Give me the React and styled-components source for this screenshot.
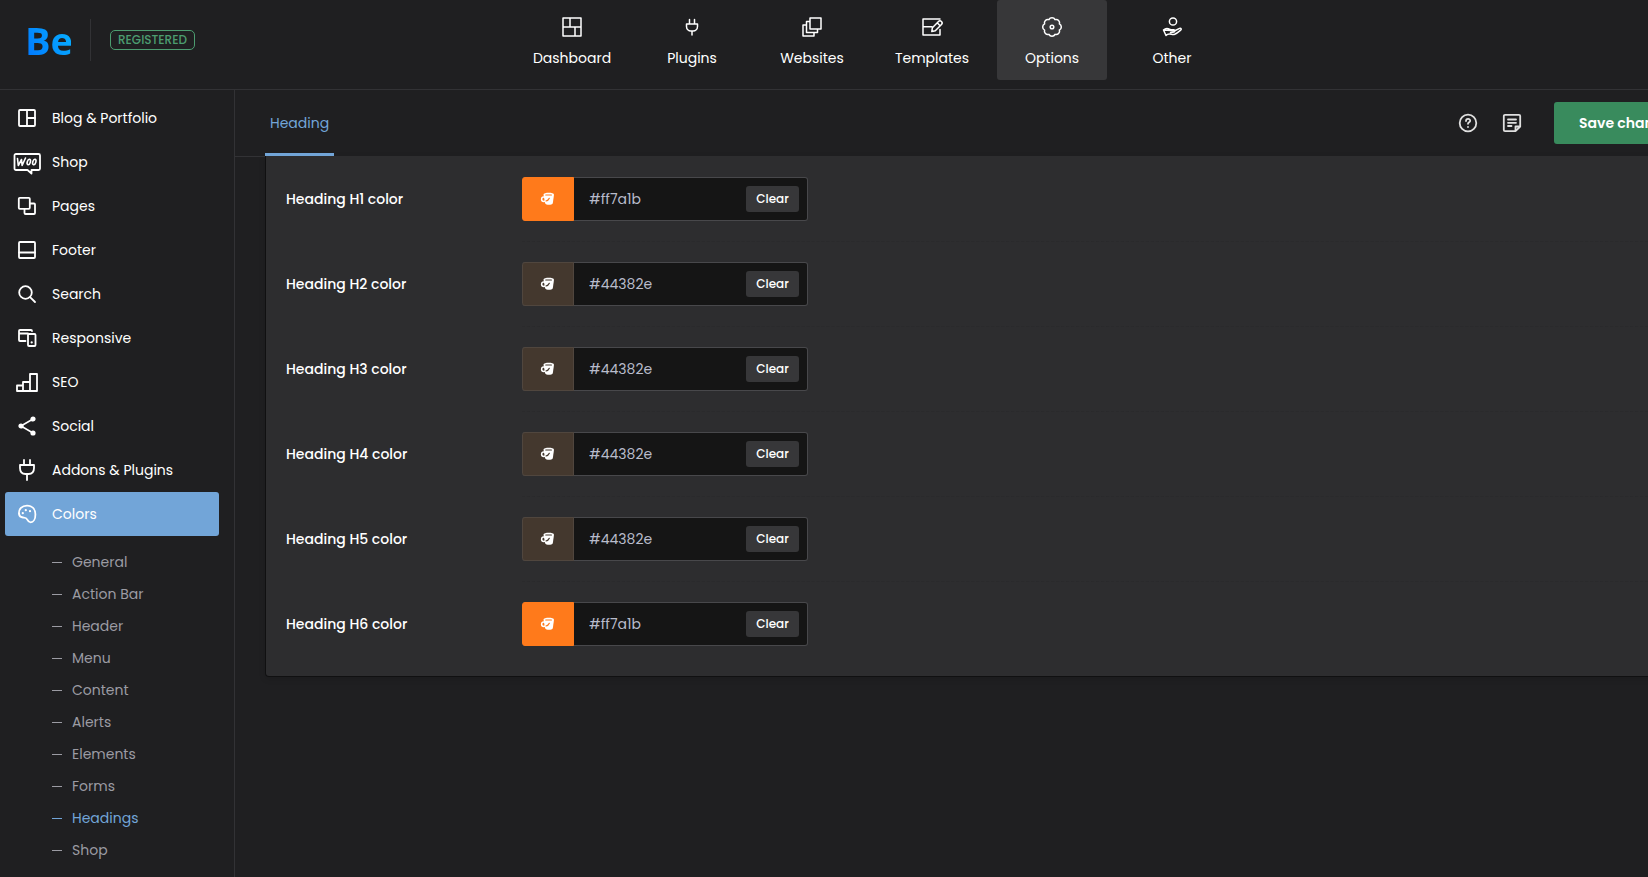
import React from "react";
import styled, { createGlobalStyle } from "styled-components";

const c = {
  bg: "#1f1f21",
  panel: "#2d2d2f",
  raised: "#373739",
  line: "#323235",
  blue: "#72a5d8",
  green: "#398b5d",
};

const Global = createGlobalStyle`
  * { box-sizing: border-box; }
  html, body { margin: 0; background: ${c.bg}; }
  body {
    font: 400 14px/24px Poppins, Inter, sans-serif;
    color: #fff;
    overflow: hidden;
  }
  a { color: inherit; text-decoration: none; }
  button, input { font: inherit; color: inherit; border: 0; margin: 0; }
  ul { list-style: none; margin: 0; padding: 0; }
`;

const Page = styled.div`
  width: calc(100% + 96px);
  height: 100vh;
  display: flex;
  flex-direction: column;
  overflow: hidden;
`;

const Header = styled.header`
  display: grid;
  grid-template-columns: 1fr auto 1fr;
  align-items: start;
  height: 90px;
  flex: none;
  border-bottom: 1px solid ${c.line};
`;

const Brand = styled.div`
  display: flex;
  align-items: center;
  gap: 19px;
  height: 80px;
  padding-left: 25px;
`;

const Logo = styled.a`
  width: 46px;
  font: 700 38px/40px "Open Sans", sans-serif;
  background: linear-gradient(60deg, #0075ff, #08b4ff);
  background-clip: text;
  color: transparent;
`;

const Divider = styled.span`
  width: 1px;
  height: 42px;
  background: ${c.line};
`;

const Badge = styled.span`
  padding: 0 7px;
  border: 1px solid #4c9c70;
  border-radius: 5px;
  font-size: 12px;
  font-weight: 500;
  line-height: 18px;
  color: #4c9c70;
`;

const TopNav = styled.nav`
  display: flex;
  gap: 10px;
`;

const TopLink = styled.a`
  width: 110px;
  height: 80px;
  padding-top: 16px;
  display: flex;
  flex-direction: column;
  align-items: center;
  gap: 8px;
  border-radius: 3px;
  background: ${(p) => (p.$active ? c.raised : "transparent")};
`;

const Icon = styled.svg`
  width: 22px;
  height: 22px;
  flex: none;
  fill: none;
  stroke: currentColor;
  stroke-width: ${(p) => (p.$bold ? 1.8 : 1.5)};
  stroke-linecap: round;
  stroke-linejoin: round;
  overflow: visible;
`;

const Body = styled.div`
  display: flex;
  flex: 1;
  min-height: 0;
`;

const Sidebar = styled.aside`
  width: 235px;
  flex: none;
  padding: 6px 15px 0 5px;
  border-right: 1px solid ${c.line};
  overflow: hidden;
`;

const SideLink = styled.a`
  display: flex;
  align-items: center;
  gap: 14px;
  height: 44px;
  padding-left: 11px;
  border-radius: 3px;
  background: ${(p) => (p.$active ? c.blue : "transparent")};
`;

const SubMenu = styled.ul`
  padding: 10px 0 0 47px;
`;

const SubLink = styled.a`
  display: flex;
  align-items: center;
  gap: 10px;
  height: 32px;
  color: ${(p) => (p.$active ? c.blue : "#9b9ba3")};

  &::before {
    content: "";
    width: 10px;
    height: 1px;
    background: currentColor;
  }
`;

const Main = styled.main`
  flex: 1;
  min-width: 0;
`;

const TabBar = styled.div`
  display: flex;
  align-items: center;
  justify-content: space-between;
  height: 67px;
  padding: 0 40px 0 30px;
  border-bottom: 1px solid ${c.line};
`;

const Tab = styled.a`
  position: relative;
  z-index: 1;
  align-self: stretch;
  padding: 0 5px;
  border-bottom: 3px solid ${c.blue};
  line-height: 66px;
  color: ${c.blue};
`;

const Actions = styled.div`
  display: flex;
  align-items: center;
`;

const IconButton = styled.button`
  display: grid;
  place-items: center;
  width: 44px;
  height: 44px;
  padding: 0;
  background: none;
  color: #e0e0e0;
`;

const Save = styled.button`
  width: 150px;
  height: 42px;
  margin-left: 20px;
  padding: 0 25px;
  border-radius: 3px;
  background: ${c.green};
  font-weight: 600;
  text-align: left;
  white-space: nowrap;
`;

const Panel = styled.section`
  margin: -1px 30px 0 30px;
  padding: 1px 0 9px;
  border: solid #101011;
  border-width: 0 1px 1px;
  border-radius: 0 0 4px 4px;
  background: ${c.panel};
  box-shadow: 0 2px 6px #00000022;
`;

const Row = styled.div`
  display: flex;
  padding-left: 20px;
`;

const Label = styled.label`
  width: 236px;
  line-height: 84px;
  font-weight: 500;
`;

const Field = styled.div`
  flex: 1;
  padding: 20px 0;
  border-bottom: 1px dashed #2a2a2c;
  ${Row}:last-child & { border-color: transparent; }
`;

const Picker = styled.div`
  display: flex;
  align-items: center;
  width: 286px;
  height: 44px;
  padding-right: 8px;
  border: 1px solid #48484b;
  border-left: 0;
  border-radius: 3px;
  background: #151515;
`;

const Swatch = styled.button`
  display: grid;
  place-items: center;
  flex: none;
  width: 52px;
  height: 44px;
  padding: 0;
  border: 1px solid ${(p) => p.$edge};
  border-radius: 3px 0 0 3px;
  background: ${(p) => p.$color};
`;

const Hex = styled.input`
  flex: 1;
  min-width: 0;
  height: 42px;
  padding: 0 14px 0 15px;
  background: none;
  outline: 0;
  color: #b9bccb;
`;

const Clear = styled.button`
  width: 53px;
  height: 26px;
  padding: 0;
  border-radius: 3px;
  background: ${c.raised};
  font-size: 12px;
  font-weight: 500;
`;

// Eight arcs joined at valleys set evenly round the centre
const scallop = Array.from({ length: 9 }, (_, i) => {
  const a = ((i * 45 + 22.5) * Math.PI) / 180;
  const x = (11 + 8 * Math.cos(a)).toFixed(2);
  const y = (11 + 8 * Math.sin(a)).toFixed(2);
  return i ? `A3.4 3.4 0 0 1 ${x} ${y}` : `M${x} ${y}`;
}).join("");

const icons = {
  dashboard: <path d="M2 2h18v18H2zM2 11h18M9 2v9M14 11v9" />,
  plug: <path d="M8.500 3.500v4M13.500 3.500v4M5.500 8h11v2.500a4.500 4.500 0 0 1-4.500 4.500h-2a4.500 4.500 0 0 1-4.500-4.500zM11 15v4" />,
  websites: <path d="M9 2h11v11H9zM9 5.500H5.500v11h11V13M5.500 9H2v11h11v-3.500" />,
  templates: (
    <path d="M19 13.500V19H2V3h17M2 10.800h9M10.800 15.500l.6-3.800 6.100-6.200a1.900 1.900 0 0 1 3 2.900l-6.200 6.300zM16.200 6.800l2.900 2.900" />
  ),
  gear: (
    <>
      <path d={scallop} />
      <circle cx="11" cy="11" r="1.800" />
    </>
  ),
  other: (
    <>
      <circle cx="12" cy="5.500" r="3.600" />
      <path d="M2.500 14c1.700-1.600 4-1.900 6-.8l1.300.6h3c1.200 0 1.400 1.800.2 2.100l-3.500.5M13.800 14.700l4.800-2.300c1.400-.6 2.200.8 1.100 1.700-2 1.700-3.900 3.300-6 4.200-1 .4-2 .3-3.300 0-2-.5-3.900-.5-5.400 1.200L2.500 14z" />
    </>
  ),
  blog: (
    <>
      <rect x="3" y="3" width="16" height="16" rx="1" />
      <path d="M11 3v16M11 11h8" />
    </>
  ),
  woo: (
    <>
      <path d="M0 3h22.500A1.500 1.500 0 0 1 24 4.500v13a1.500 1.500 0 0 1-1.500 1.500H15.500v3.500L11.500 19H0a1.500 1.500 0 0 1-1.500-1.500v-13A1.500 1.500 0 0 1 0 3z" />
      <path d="M1.500 7.500l.8 7 3.200-6 .6 6 3.400-7.500" strokeWidth="1.600" />
      <ellipse cx="12.800" cy="11" rx="1.500" ry="2.800" transform="rotate(18 12.800 11)" strokeWidth="1.600" />
      <ellipse cx="18.300" cy="11" rx="1.500" ry="2.800" transform="rotate(18 18.300 11)" strokeWidth="1.600" />
    </>
  ),
  pages: (
    <>
      <rect x="2.800" y="2.800" width="11" height="11" rx="1" />
      <path d="M14 8.500h4a1 1 0 0 1 1 1V18a1 1 0 0 1-1 1H9.500a1 1 0 0 1-1-1v-4" />
    </>
  ),
  footer: (
    <>
      <rect x="3" y="3" width="16" height="16" rx="1" />
      <path d="M3 13.500h16" />
    </>
  ),
  search: (
    <>
      <circle cx="9.500" cy="9.500" r="6.300" />
      <path d="m14.300 14.300 4.700 4.700" />
    </>
  ),
  responsive: (
    <>
      <path d="M9.500 14H4a1 1 0 0 1-1-1V4a1 1 0 0 1 1-1h11a1 1 0 0 1 1 1M3 6.500h9" />
      <rect x="12" y="7" width="7.500" height="12" rx="1" />
      <path d="M15.700 15.300v.2" strokeWidth="2.200" />
    </>
  ),
  seo: <path d="M1 14.500h6V20H1zM7 11h7v9H7zM14 3h7v17h-7z" />,
  social: (
    <>
      <path d="m17 4-12 7 12 7" strokeWidth="1.500" />
      <g fill="currentColor">
        <circle cx="17" cy="4" r="1.700" />
        <circle cx="5" cy="11" r="1.700" />
        <circle cx="17" cy="18" r="1.700" />
      </g>
    </>
  ),
  addons: <path d="M8 1v4.500M14 1v4.500M4 6h14v3c0 4-2.500 6-5.500 6h-3C6.500 15 4 13 4 9zM11 15v6" />,
  colors: (
    <>
      <path d="M3 11C2.500 6 6 2.600 11 2.600c5.500 0 8.400 4 8.400 8.900 0 4.600-2 7.800-4.800 7.800-2.300 0-2.900-1.800-3.500-3-.9-1.900-2.300-1.600-4.100-1.800-2.400-.2-3.700-1.500-4-3.500z" />
      <path d="M6.800 10v.2M9.800 7v.2M14 8v.2" strokeWidth="2.200" />
    </>
  ),
  help: (
    <>
      <circle cx="11" cy="11" r="8.300" />
      <path d="M9 9c0-2.800 4.200-2.800 4.200-.2 0 1.500-2.200 1.500-2.200 3M11 14.800v.2" />
    </>
  ),
  note: (
    <path d="M4 2.800h14a1.200 1.200 0 0 1 1.200 1.200v10.500l-4.700 4.700H4A1.200 1.200 0 0 1 2.800 18V4A1.200 1.200 0 0 1 4 2.800zM14.500 19v-4.500H19M7 7.500h8M7 10.800h8M7 14h3.500" />
  ),
};

const Glyph = ({ name, bold }) => (
  <Icon viewBox="0 0 22 22" aria-hidden="true" $bold={bold}>
    {icons[name]}
  </Icon>
);

const Bucket = ({ ink }) => (
  <Icon viewBox="0 0 22 22" aria-hidden="true">
    <path
      d="M6.500 6.800c0-2.600 10.500-2.600 10.500 0l-1.200 8.400c-1 2-6.700 2-7.700 0z"
      fill="currentColor"
      stroke="none"
    />
    <circle cx="6.800" cy="11.300" r="2.200" />
    <path d="M8.800 7h5.600M12.300 10.300c-.6 1.400-1.800 2.400-3.300 2.700" stroke={ink} strokeWidth="1.200" />
  </Icon>
);

const topItems = [
  ["Dashboard", "dashboard"],
  ["Plugins", "plug"],
  ["Websites", "websites"],
  ["Templates", "templates"],
  ["Options", "gear"],
  ["Other", "other"],
];

const sideItems = [
  ["Blog & Portfolio", "blog"],
  ["Shop", "woo"],
  ["Pages", "pages"],
  ["Footer", "footer"],
  ["Search", "search"],
  ["Responsive", "responsive"],
  ["SEO", "seo"],
  ["Social", "social"],
  ["Addons & Plugins", "addons"],
  ["Colors", "colors"],
];

const subItems = ["General", "Action Bar", "Header", "Menu", "Content", "Alerts", "Elements", "Forms", "Headings", "Shop"];

const headingColors = ["#ff7a1b", "#44382e", "#44382e", "#44382e", "#44382e", "#ff7a1b"];

function ColorRow({ level, color }) {
  const id = `heading-h${level}`;
  return (
    <Row>
      <Label htmlFor={id}>Heading H{level} color</Label>
      <Field>
        <Picker>
          <Swatch
            type="button"
            aria-label={`Pick H${level} color`}
            $color={color}
            $edge={color === "#ff7a1b" ? color : "#50463e"}
          >
            <Bucket ink={color} />
          </Swatch>
          <Hex id={id} type="text" defaultValue={color} />
          <Clear type="button">Clear</Clear>
        </Picker>
      </Field>
    </Row>
  );
}

export default function App() {
  return (
    <>
      <Global />
      <Page>
        <Header>
          <Brand>
            <Logo href="#">Be</Logo>
            <Divider />
            <Badge>REGISTERED</Badge>
          </Brand>
          <TopNav>
            {topItems.map(([label, icon]) => (
              <TopLink key={label} href="#" $active={label === "Options"}>
                <Glyph name={icon} />
                {label}
              </TopLink>
            ))}
          </TopNav>
        </Header>
        <Body>
          <Sidebar>
            {sideItems.map(([label, icon]) => (
              <SideLink key={label} href="#" $active={label === "Colors"}>
                <Glyph name={icon} bold />
                {label}
              </SideLink>
            ))}
            <SubMenu>
              {subItems.map((label) => (
                <li key={label}>
                  <SubLink href="#" $active={label === "Headings"}>
                    {label}
                  </SubLink>
                </li>
              ))}
            </SubMenu>
          </Sidebar>
          <Main>
            <TabBar>
              <Tab href="#">Heading</Tab>
              <Actions>
                <IconButton type="button" aria-label="Help">
                  <Glyph name="help" bold />
                </IconButton>
                <IconButton type="button" aria-label="Notes">
                  <Glyph name="note" bold />
                </IconButton>
                <Save type="button">Save changes</Save>
              </Actions>
            </TabBar>
            <Panel>
              {headingColors.map((color, i) => (
                <ColorRow key={i} level={i + 1} color={color} />
              ))}
            </Panel>
          </Main>
        </Body>
      </Page>
    </>
  );
}
